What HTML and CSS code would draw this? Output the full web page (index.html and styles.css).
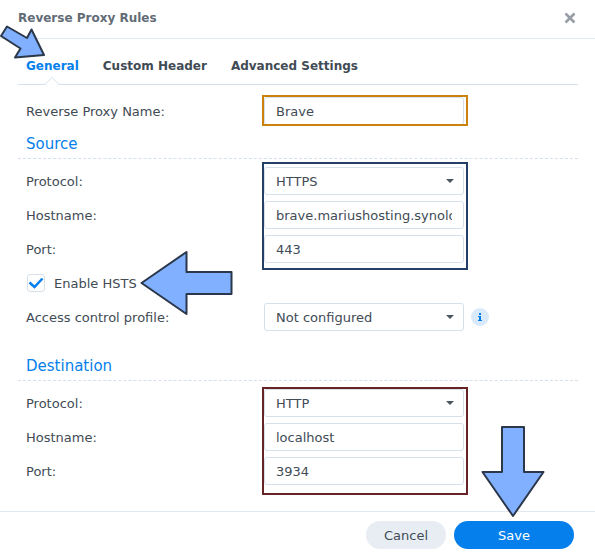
FILE: index.html
```html
<!DOCTYPE html>
<html lang="en">
<head>
<meta charset="utf-8">
<title>Reverse Proxy Rules</title>
<link rel="stylesheet" href="styles.css">
</head>
<body>
<form class="dialog">
  <header class="dialog-header">
    <h1 class="dialog-title">Reverse Proxy Rules</h1>
    <button class="close" type="button" aria-label="Close">
      <svg width="12" height="12" viewBox="0 0 12 12"><path d="M1.500 1.500 10.500 10.500M10.500 1.500 1.500 10.500" fill="none" stroke="#989da6" stroke-width="2.600"/></svg>
    </button>
  </header>
  <main class="dialog-body">
    <nav class="tabs">
      <a class="tab tab-active" href="#general">General
        <svg class="notch" width="16" height="9" viewBox="0 0 16 9"><path d="M1 9 8 1.500 15 9z" fill="#fff"/><path d="M0 8.500H1L8 1.500 15 8.500H16" fill="none" stroke="#d5e0ea"/></svg>
        <svg class="arrow arrow-tab" width="48" height="38" viewBox="0 0 48 38"><path d="M7 4.500 27 16 31.500 7.500 44 33 15 35.500 20.500 26.500 1 14z"/></svg>
      </a>
      <a class="tab" href="#header">Custom Header</a>
      <a class="tab" href="#advanced">Advanced Settings</a>
    </nav>
    <div class="rows rows-name frame frame-name">
      <div class="row">
        <label for="name">Reverse Proxy Name:</label>
        <input class="field" id="name" type="text" value="Brave">
      </div>
    </div>
    <section>
      <h2 class="section-title">Source</h2>
      <div class="rows frame frame-source">
        <div class="row">
          <label for="src-protocol">Protocol:</label>
          <div class="select"><select class="field" id="src-protocol"><option>HTTPS</option></select></div>
        </div>
        <div class="row">
          <label for="src-host">Hostname:</label>
          <input class="field" id="src-host" type="text" value="brave.mariushosting.synology.me">
        </div>
        <div class="row">
          <label for="src-port">Port:</label>
          <input class="field" id="src-port" type="text" value="443">
        </div>
      </div>
      <div class="rows rows-more">
        <div class="check-row">
          <span class="check">
            <input id="hsts" type="checkbox" checked>
            <svg width="18" height="18" viewBox="0 0 18 18"><path d="M2.500 8.500 7.500 13 15.500 4.500" fill="none" stroke="#057feb" stroke-width="2.500"/></svg>
          </span>
          <label for="hsts">Enable HSTS</label>
          <svg class="arrow arrow-hsts" width="94" height="66" viewBox="0 0 94 66"><path d="M2.500 33 47.500 2V22H92.500V44H47.500V64z"/></svg>
        </div>
        <div class="row">
          <label for="profile">Access control profile:</label>
          <div class="select"><select class="field" id="profile"><option>Not configured</option></select></div>
          <button class="info" type="button" aria-label="Information">
            <svg width="18" height="18" viewBox="0 0 18 18"><path d="M8 5h2v2H8zM7 8h3v4h1v1H7v-1h1V9H7z" fill="#057feb"/></svg>
          </button>
        </div>
      </div>
    </section>
    <section class="destination">
      <h2 class="section-title">Destination</h2>
      <div class="rows frame frame-destination">
        <div class="row">
          <label for="dst-protocol">Protocol:</label>
          <div class="select"><select class="field" id="dst-protocol"><option>HTTP</option></select></div>
        </div>
        <div class="row">
          <label for="dst-host">Hostname:</label>
          <input class="field" id="dst-host" type="text" value="localhost">
        </div>
        <div class="row">
          <label for="dst-port">Port:</label>
          <input class="field" id="dst-port" type="text" value="3934">
        </div>
      </div>
    </section>
  </main>
  <footer class="dialog-footer">
    <button class="button" type="button">Cancel</button>
    <button class="button button-primary" type="button">Save
      <svg class="arrow arrow-save" width="66" height="94" viewBox="0 0 66 94"><path d="M22 2H44V47H63.500L33 91 2.500 47H22z"/></svg>
    </button>
  </footer>
</form>
</body>
</html>
```
FILE: styles.css
```css
*,
*::after {
  box-sizing: border-box;
}

body {
  margin: 0;
  background: #fff;
  color: #414b55;
  font: 13px/28px Verdana, "DejaVu Sans", sans-serif;
}

button {
  padding: 0;
  border: 0;
  background: none;
  font: inherit;
}

svg {
  display: block;
}

label {
  padding-top: 2px;
  line-height: 26px;
}

.dialog-header {
  display: flex;
  align-items: center;
  justify-content: space-between;
  height: 39px;
  padding: 0 19px 2px 18px;
  border-bottom: 1px solid #e1e8f0;
}

.dialog-title {
  margin: 0;
  color: #626c76;
  font-size: 12px;
}

.dialog-body {
  padding: 0 17px 26px 18px;
}

.tabs {
  display: flex;
  gap: 24px;
  height: 46px;
  padding: 0 8px;
  border-bottom: 1px solid #d5e0ea;
}

.tab {
  position: relative;
  color: #414b55;
  font-size: 12px;
  font-weight: bold;
  line-height: 54px;
  text-decoration: none;
}

.tab-active {
  color: #057feb;
}

.notch {
  position: absolute;
  bottom: -1px;
  left: 18px;
}

.arrow {
  position: absolute;
  fill: #80b0ff;
  stroke: #2b374a;
  stroke-width: 2;
  stroke-linejoin: round;
  pointer-events: none;
}

.arrow-tab {
  top: -17px;
  left: -26px;
}

.rows {
  position: relative;
  display: grid;
  gap: 6px;
  padding-left: 8px;
}

.rows-name {
  margin-top: 12px;
}

.rows-more {
  margin-top: 6px;
}

.row {
  display: grid;
  grid-template-columns: 238px 200px 18px;
  align-items: center;
}

.field {
  display: block;
  width: 100%;
  height: 28px;
  margin: 0;
  padding: 0 11px;
  border: 1px solid #d5e0ea;
  border-radius: 3px;
  background: #fff;
  color: #414b55;
  font: inherit;
  appearance: none;
}

input.field {
  padding-top: 2px;
}

.select {
  position: relative;
}

.select::after {
  position: absolute;
  top: 12px;
  right: 10px;
  border: 4px solid transparent;
  border-top-color: #4b5660;
  border-bottom: 0;
  content: "";
}

.frame::after {
  position: absolute;
  left: 244px;
  width: 206px;
  border: 2px solid;
  pointer-events: none;
  content: "";
}

.frame-name::after {
  top: -2px;
  bottom: -1px;
  border-color: #ca820d;
}

.frame-source::after {
  top: -5px;
  bottom: -7px;
  border-color: #243f68;
}

.frame-destination::after {
  top: -2px;
  bottom: -10px;
  border-color: #672427;
}

.section-title {
  margin: 5px 0 8px;
  padding-left: 8px;
  border-bottom: 1px dashed #d5e0ea;
  color: #057feb;
  font-size: 15px;
  font-weight: normal;
}

.destination {
  margin-top: 21px;
}

.check-row {
  position: relative;
  display: flex;
  align-items: center;
  gap: 9px;
  padding-left: 1px;
}

.check {
  position: relative;
}

.check input {
  display: block;
  width: 18px;
  height: 18px;
  margin: 0;
  border: 1px solid #d5e0ea;
  border-radius: 3px;
  appearance: none;
}

.check svg {
  position: absolute;
  inset: 0;
  pointer-events: none;
}

.arrow-hsts {
  top: -19px;
  left: 113px;
}

.info {
  width: 18px;
  height: 18px;
  margin-left: 7px;
  border-radius: 50%;
  background: #d9eafc;
}

.dialog-footer {
  display: flex;
  justify-content: flex-end;
  gap: 8px;
  padding: 9px 21px 8px;
  border-top: 1px solid #e1e8f0;
}

.button {
  position: relative;
  width: 80px;
  height: 28px;
  padding-top: 2px;
  border-radius: 14px;
  background: #e8edf4;
  color: #414b55;
  line-height: 26px;
}

.button-primary {
  width: 120px;
  background: #057feb;
  color: #fff;
}

.arrow-save {
  bottom: 30px;
  left: 26px;
}
```
